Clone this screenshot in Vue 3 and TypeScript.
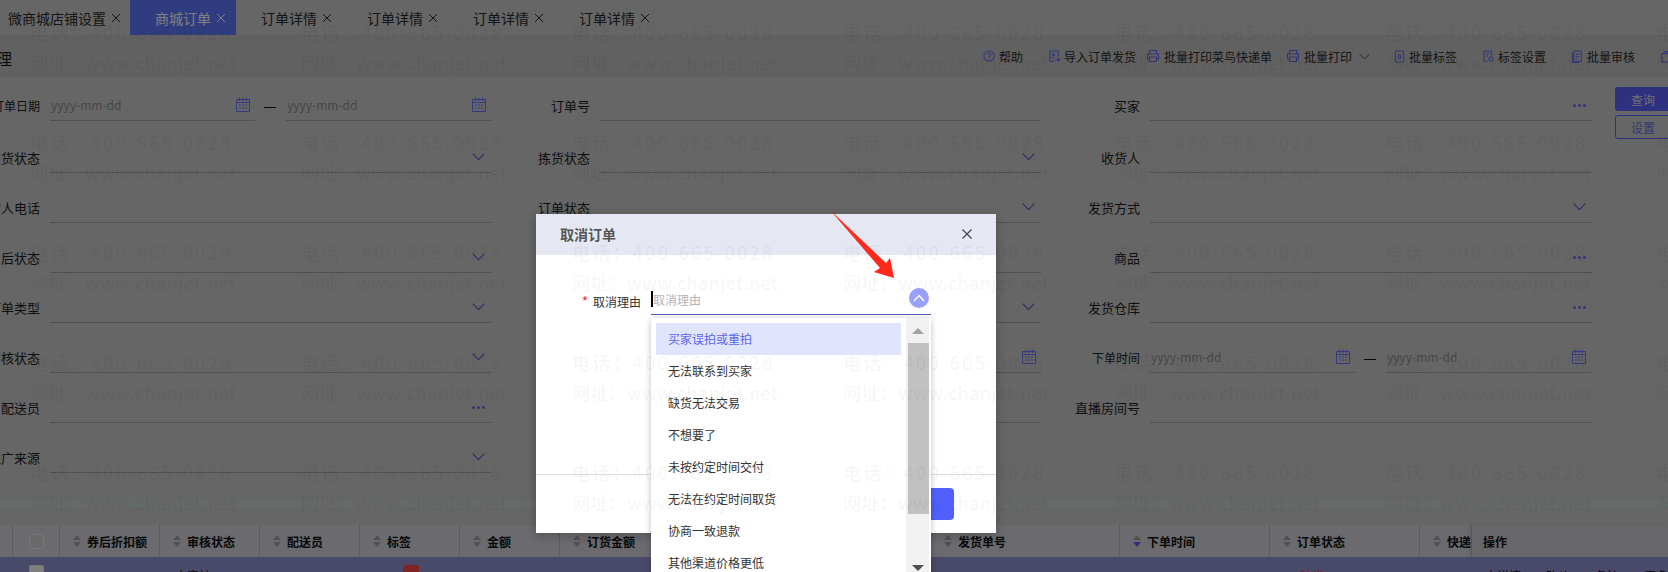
<script setup lang="ts">
type Kind = 'text' | 'select' | 'more' | 'date' | 'none'
interface Field { label: string; kind: Kind }

const tabs = [
  { name: '微商城店铺设置', first: true },
  { name: '商城订单', active: true },
  { name: '订单详情' },
  { name: '订单详情' },
  { name: '订单详情' },
  { name: '订单详情' },
]

const icons: Record<string, string> = {
  help: 'M6.5 1a5.5 5.5 0 1 0 0 11a5.5 5.5 0 0 0 0-11zM4.8 5.2a1.7 1.7 0 1 1 2.6 1.5c-.6.4-.9.7-.9 1.4M6.5 9.4v.8',
  import: 'M2 1h9v6M2 1v11h5M4.5 3.5l3 3M7.5 3.5l-3 3M4 8.5h3M8 10.5h4.5M10.5 8.5l2 2l-2 2',
  print: 'M3.5 5V1.5h7V5M3.5 10H1.5V5h11v5h-2M3.5 8h7v4.5h-7z',
  tag: 'M4 1h6a1.5 1.5 0 0 1 1.5 1.5v9A1.5 1.5 0 0 1 10 13H4a1.5 1.5 0 0 1-1.5-1.5v-9A1.5 1.5 0 0 1 4 1zM7 4.5a1 2 0 1 0 0 5a1 2 0 0 0 0-5z',
  setting: 'M2 1h8v5M2 1v11h4M4 4h4M4 6.5h2M9.5 7.5a2.2 2.2 0 1 0 0 4.4a2.2 2.2 0 0 0 0-4.4z',
  audit: 'M3 1h8v11H3zM1.5 3v10.5h7M5 4.5h4M5 7h4M5 9.5h2',
  box: 'M2 4h9v9H2zM4.5 4V1.5h4V4',
}

const tools = [
  { icon: 'help', text: '帮助', cls: '' },
  { icon: 'import', text: '导入订单发货', cls: '' },
  { icon: 'print', text: '批量打印菜鸟快递单', cls: 'tight wide' },
  { icon: 'print', text: '批量打印', cls: 'mid wide', caret: true },
  { icon: 'tag', text: '批量标签', cls: 'near' },
  { icon: 'setting', text: '标签设置', cls: '' },
  { icon: 'audit', text: '批量审核', cls: '' },
  { icon: 'box', text: '', cls: '' },
]

const rows: Field[][] = [
  [{ label: '订单日期', kind: 'date' }, { label: '订单号', kind: 'text' }, { label: '买家', kind: 'more' }],
  [{ label: '发货状态', kind: 'select' }, { label: '拣货状态', kind: 'select' }, { label: '收货人', kind: 'text' }],
  [{ label: '收货人电话', kind: 'text' }, { label: '订单状态', kind: 'select' }, { label: '发货方式', kind: 'select' }],
  [{ label: '售后状态', kind: 'select' }, { label: '快递单号', kind: 'text' }, { label: '商品', kind: 'more' }],
  [{ label: '订单类型', kind: 'select' }, { label: '订单来源', kind: 'select' }, { label: '发货仓库', kind: 'more' }],
  [{ label: '审核状态', kind: 'select' }, { label: '支付时间', kind: 'date' }, { label: '下单时间', kind: 'date' }],
  [{ label: '配送员', kind: 'more' }, { label: '备注', kind: 'text' }, { label: '直播房间号', kind: 'text' }],
  [{ label: '推广来源', kind: 'select' }, { label: '', kind: 'none' }, { label: '', kind: 'none' }],
]

const columns = [
  { title: '券后折扣额' },
  { title: '审核状态' },
  { title: '配送员' },
  { title: '标签' },
  { title: '金额' },
  { title: '订货金额' },
  { title: '优惠金额' },
  { title: '发货单号' },
  { title: '下单时间', active: true },
  { title: '订单状态' },
  { title: '快递' },
]

const reasons = [
  '买家误拍或重拍',
  '无法联系到买家',
  '缺货无法交易',
  '不想要了',
  '未按约定时间交付',
  '无法在约定时间取货',
  '协商一致退款',
  '其他渠道价格更低',
]

const marks = Array.from({ length: 35 }, (_, i) => i)
</script>

<template>
  <div class="page">
    <nav class="tabs">
      <div v-for="(t, i) in tabs" :key="i" class="tab" :class="{ first: t.first, active: t.active }">
        <span>{{ t.name }}</span>
        <svg class="tab-x" width="10" height="10" viewBox="0 0 10 10"><path d="M1 1l8 8M9 1l-8 8" /></svg>
      </div>
    </nav>

    <header class="band">
      <h1 class="title">订单管理</h1>
      <div class="tools">
        <div v-for="(t, i) in tools" :key="i" class="tool" :class="t.cls">
          <svg class="tool-icon" viewBox="0 0 14 14"><path :d="icons[t.icon]" /></svg>
          <span v-if="t.text">{{ t.text }}</span>
          <svg v-if="t.caret" class="tool-caret" width="11" height="7" viewBox="0 0 11 7"><path d="M.5 1l5 5l5-5" /></svg>
        </div>
      </div>
    </header>

    <section class="query">
      <div class="form">
        <div v-for="(row, r) in rows" :key="r" class="form-row">
          <div v-for="(f, c) in row" :key="c" class="field">
            <template v-if="f.kind !== 'none'">
              <label class="field-label" :class="{ small: f.kind === 'date' }">{{ f.label }}</label>
              <div v-if="f.kind === 'date'" class="range">
                <div v-for="n in 2" :key="n" class="date-box">
                  <span class="ph">yyyy-mm-dd</span>
                  <svg class="cal" width="14" height="15" viewBox="0 0 14 15">
                    <path d="M.5 2.5h13v12H.5zM.5 5.5h13M3.5 .5v3.5M7 .5v3.5M10.5 .5v3.5" />
                    <path d="M3 8h2M6 8h2M9 8h2M3 11h2M6 11h2M9 11h2" />
                  </svg>
                </div>
                <span class="dash"></span>
              </div>
              <div v-else class="control">
                <svg v-if="f.kind === 'select'" class="chev" width="13" height="8" viewBox="0 0 13 8"><path d="M.7 .7l5.8 6l5.8-6" /></svg>
                <span v-if="f.kind === 'more'" class="more"><i></i><i></i><i></i></span>
              </div>
            </template>
          </div>
        </div>
      </div>
      <div class="query-btns">
        <button class="btn primary">查询</button>
        <button class="btn outline">设置</button>
      </div>
    </section>

    <div class="strip"></div>

    <section class="grid">
      <div class="th edge"></div>
      <div class="th check-cell"><span class="check"></span></div>
      <div v-for="col in columns" :key="col.title" class="th">
        <span class="sort" :class="{ on: col.active }"><i class="up"></i><i class="down"></i></span>
        <span class="th-text">{{ col.title }}</span>
      </div>
      <div class="th fixed">操作</div>

      <div class="td edge"></div>
      <div class="td check-cell"><span class="check row-check"></span></div>
      <div class="td">0.00</div>
      <div class="td">未审核</div>
      <div class="td"></div>
      <div class="td tag-cell"><span class="tag"></span></div>
      <div class="td">0.01</div>
      <div class="td">0.01</div>
      <div class="td"></div>
      <div class="td"></div>
      <div class="td">2022-09-09 12:42:10</div>
      <div class="td status"><i class="dot"></i><span>缺货</span></div>
      <div class="td"></div>
      <div class="td fixed ops"><span>查详情</span><span>改价</span><span>备注</span><span>更多</span></div>
    </section>

    <div class="mask"></div>

    <div class="dialog">
      <div class="dlg-head">
        <span>取消订单</span>
        <svg class="dlg-x" width="12" height="12" viewBox="0 0 12 12"><path d="M1.5 1.5l9 9M10.5 1.5l-9 9" /></svg>
      </div>
      <div class="dlg-body">
        <div class="reason">
          <label class="reason-label"><em>*</em> 取消理由</label>
          <div class="reason-input">
            <i class="caret"></i>
            <span class="reason-ph">取消理由</span>
            <span class="circle">
              <svg width="12" height="8" viewBox="0 0 12 8"><path d="M1 7l5-5.5l5 5.5" /></svg>
            </span>
            <div class="drop">
              <ul class="drop-list">
                <li v-for="(r, i) in reasons" :key="r" :class="{ hot: i === 0 }">{{ r }}</li>
              </ul>
              <div class="scroll">
                <span class="scroll-btn"><i class="tri-up"></i></span>
                <span class="thumb"></span>
                <span class="scroll-fill"></span>
                <span class="scroll-btn"><i class="tri-down"></i></span>
              </div>
            </div>
          </div>
        </div>
      </div>
      <div class="dlg-foot"><button class="ok">确定</button></div>
    </div>

    <div class="marks">
      <div v-for="m in marks" :key="m" class="mark">
        <span class="mark-tel">电话：400-665-0028</span>
        <span class="mark-web">网址：www.chanjet.net</span>
      </div>
    </div>

    <svg class="pointer" width="90" height="90" viewBox="820 200 90 90">
      <path d="M830 210L886 263L890 258L894 278L874 272L880 268Z" />
    </svg>
  </div>
</template>

<style>
html, body { margin: 0; padding: 0; }
</style>

<style scoped>
.page {
  position: relative;
  width: 1668px;
  height: 572px;
  overflow: hidden;
  background: #cdcdcd;
  font-family: "Noto Sans CJK SC", "Noto Sans", sans-serif;
  font-size: 12px;
  color: #222;
}
.tabs { display: flex; height: 35px; }
.tab {
  display: flex;
  align-items: center;
  gap: 5px;
  padding: 0 10px 0 25px;
  font-size: 14px;
  color: #2a2a2a;
  width: 106px;
  flex: none;
  box-sizing: border-box;
  white-space: nowrap;
}
.tab.first { width: 130px; padding-left: 8px; }
.tab.active { background: #5f78ff; color: #ffffff; }
.tab-x { fill: none; stroke: currentColor; stroke-width: 1; flex: none; }

.band { display: flex; align-items: center; height: 42px; background: #c2c2c2; }
.title { margin: 3px 0 0 -52px; font-size: 16px; font-weight: 400; width: 64px; flex: none; white-space: nowrap; color: #111; }
.tools { display: flex; align-items: center; margin-left: 971px; flex: none; color: #2a2a2a; }
.tool { display: flex; align-items: center; gap: 3px; margin-left: 25px; white-space: nowrap; }
.tool:first-child { margin-left: 0; }
.tool.tight { margin-left: 10px; }
.tool.mid { margin-left: 14px; }
.tool.near { margin-left: 23px; }
.tool-icon { width: 13px; height: 13px; fill: none; stroke: #6268ee; stroke-width: 1.1; flex: none; }
.tool.wide { gap: 4px; }
.tool.wide .tool-icon { width: 14px; height: 14px; }
.tool-caret { fill: none; stroke: #555; margin-left: 3px; }

.query { display: flex; align-items: flex-start; }
.form { margin-left: -19px; width: 1611px; flex: none; }
.form-row { display: grid; grid-template-columns: 510px 510px 511px; column-gap: 40px; height: 50px; align-items: end; }
.form-row:first-child { height: 44px; }
.form-row:nth-child(2) { height: 52px; }
.field { display: flex; align-items: flex-end; gap: 10px; }
.field-label {
  width: 59px;
  flex: none;
  display: flex;
  justify-content: flex-end;
  white-space: nowrap;
  font-size: 13px;
  line-height: 30px;
  color: #1c1c1c;
}
.field-label.small { font-size: 12px; }
.control {
  flex: 1;
  height: 30px;
  padding: 4px 6px 0 0;
  border-bottom: 1px solid #a0a0a0;
  display: flex;
  align-items: center;
  justify-content: flex-end;
  box-sizing: content-box;
}
.chev { fill: none; stroke: #5c5ccc; stroke-width: 1.2; }
.more { display: flex; gap: 2px; width: 13px; }
.more i { width: 3px; height: 3px; border-radius: 50%; background: #6a6ad8; }
.range { flex: 1; display: grid; grid-template-columns: 205px 205px; column-gap: 31px; position: relative; }
.date-box {
  height: 32px;
  padding: 2px 5px 0 1px;
  border-bottom: 1px solid #a0a0a0;
  display: flex;
  align-items: center;
  justify-content: space-between;
}
.ph { color: #8c8c8c; font-size: 12px; }
.cal { fill: none; stroke: #6a70ff; stroke-width: 1; }
.dash { position: absolute; left: 214px; top: 21px; width: 12px; height: 1px; background: #111; }

.query-btns { display: flex; flex-direction: column; gap: 4px; margin: 10px 0 0 23px; flex: none; }
.btn { width: 56px; height: 24px; border-radius: 3px; font: 12px "Noto Sans CJK SC", sans-serif; padding: 0; box-sizing: border-box; }
.btn.primary { background: #5c62ff; border: 0; color: #e0e0e0; }
.btn.outline { background: transparent; border: 1px solid #5c62ff; color: #6a70d8; }

.strip { height: 8px; margin-top: 27px; background: #cdd4cd; }

.grid {
  display: grid;
  grid-template-columns: 13px 47px 100px 100px 100px 100px 100px 185px 186px 189px 150px 150px 52px 196px;
  grid-template-rows: 32px 40px;
  margin-top: 17px;
}
.th {
  display: flex;
  align-items: center;
  background: #d4d4de;
  border-right: 1px solid #b4b4be;
  box-sizing: border-box;
  font-size: 12px;
  font-weight: 700;
  color: #111;
  padding-left: 13px;
  white-space: nowrap;
  overflow: hidden;
}
.th.edge, .td.edge { padding: 0; }
.th.check-cell, .td.check-cell { padding: 0; justify-content: center; display: flex; }
.check { width: 13px; height: 13px; border: 1px solid #eeeeee; border-radius: 2px; background: #d4d4d4; }
.row-check { background: #ffffff; margin-top: 8px; }
.sort { display: flex; flex-direction: column; gap: 2px; width: 8px; margin-right: 6px; flex: none; }
.sort i { width: 0; height: 0; border-left: 4px solid transparent; border-right: 4px solid transparent; }
.sort .up { border-bottom: 5px solid #a2a2a2; }
.sort .down { border-top: 5px solid #a2a2a2; }
.sort.on .down { border-top-color: #5f60f5; }
.th-text { display: block; }
.th.fixed { padding-left: 11px; border-right: 0; background: #cfcfd6; box-shadow: -3px 0 5px rgba(0, 0, 0, 0.08); position: relative; }
.td {
  background: #9292d4;
  padding: 11px 0 0 15px;
  font-size: 12px;
  line-height: 16px;
  color: #111;
  white-space: nowrap;
  overflow: hidden;
  box-sizing: border-box;
}
.tag-cell { padding-left: 43px; padding-top: 8px; }
.tag { display: block; width: 16px; height: 16px; border-radius: 2px; background: #ff4a4a; }
.status { display: flex; align-items: flex-start; padding-left: 14px; color: #ff4060; }
.dot { width: 4px; height: 4px; border-radius: 50%; background: #ff4060; margin: 6px 12px 0 0; }
.fixed.ops { display: flex; padding-left: 13px; gap: 25px; }

.mask { position: absolute; inset: 0; background: rgba(0, 0, 0, 0.5); z-index: 10; }

.dialog {
  position: absolute;
  left: 536px;
  top: 214px;
  width: 460px;
  height: 319px;
  z-index: 11;
  background: #fff;
  display: flex;
  flex-direction: column;
  box-shadow: 0 2px 10px rgba(0, 0, 0, 0.25);
}
.dlg-head {
  height: 41px;
  flex: none;
  box-sizing: border-box;
  background: #e5e8f3;
  display: flex;
  align-items: center;
  justify-content: space-between;
  padding: 0 23px 2px 24px;
  font-size: 14px;
  font-weight: 700;
  color: #555;
}
.dlg-x { fill: none; stroke: #444; stroke-width: 1.2; }
.dlg-body { flex: 1; }
.reason { display: flex; padding: 26px 65px 0 0; }
.reason-label { width: 105px; text-align: right; font-size: 12px; line-height: 40px; color: #333; flex: none; }
.reason-label em { color: #e33; font-style: normal; font-size: 14px; margin-right: 2px; }
.reason-input {
  flex: 1;
  margin-left: 10px;
  height: 33px;
  border-bottom: 1px solid #5560b8;
  position: relative;
  display: flex;
  align-items: center;
}
.caret { width: 2px; height: 16px; background: #000; margin-top: 3px; flex: none; }
.reason-ph { color: #b4b4b4; font-size: 12px; margin-top: 3px; }
.circle {
  width: 20px;
  height: 20px;
  border-radius: 50%;
  background: #9aa0ff;
  margin: 0 2px 0 auto;
  display: flex;
  align-items: center;
  justify-content: center;
}
.circle svg { fill: none; stroke: #fff; stroke-width: 1.4; }
.drop {
  position: absolute;
  left: 0;
  right: 0;
  top: 37px;
  height: 262px;
  background: #fff;
  box-shadow: 0 1px 6px rgba(0, 0, 0, 0.25);
  border-radius: 2px;
  display: flex;
}
.drop-list { flex: 1; list-style: none; margin: 0; padding: 5px; }
.drop-list li { height: 32px; line-height: 32px; padding-left: 12px; font-size: 12px; color: #333; }
.drop-list li.hot { background: #e1e4fd; color: #5a66f0; }
.scroll { width: 23px; margin-right: 2px; background: #f1f1f1; display: flex; flex-direction: column; flex: none; }
.scroll-btn { height: 25px; display: flex; align-items: center; justify-content: center; flex: none; }
.tri-up { border-left: 6px solid transparent; border-right: 6px solid transparent; border-bottom: 6px solid #a3a3a3; }
.tri-down { border-left: 6px solid transparent; border-right: 6px solid transparent; border-top: 6px solid #505050; }
.thumb { height: 171px; margin-left: 2px; background: #c1c1c1; flex: none; }
.scroll-fill { flex: 1; }
.dlg-foot {
  height: 59px;
  flex: none;
  box-sizing: border-box;
  border-top: 1px solid #dedede;
  display: flex;
  align-items: center;
  justify-content: flex-end;
  padding-right: 42px;
}
.ok { width: 90px; height: 32px; border: 0; border-radius: 4px; background: #5060ff; color: #fff; font: 13px "Noto Sans CJK SC", sans-serif; }

.marks {
  position: absolute;
  left: 30px;
  top: 17px;
  display: grid;
  grid-template-columns: repeat(7, 271px);
  grid-auto-rows: 110px;
  z-index: 12;
  pointer-events: none;
}
.mark { display: flex; flex-direction: column; font-size: 18px; line-height: 30px; color: rgba(0, 0, 0, 0.05); white-space: nowrap; font-weight: 500; }
.mark-tel { letter-spacing: 2.2px; }
.mark-web { letter-spacing: 0.3px; }

.pointer { position: absolute; left: 820px; top: 200px; z-index: 13; fill: #ff2a1c; }
</style>
